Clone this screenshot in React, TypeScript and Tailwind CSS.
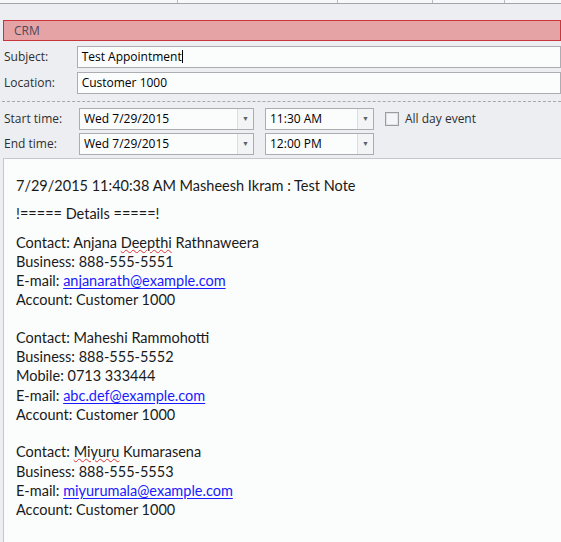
import React from 'react'

const labelFont = { fontFamily: '"Open Sans", "Noto Sans", sans-serif' }
const bodyFont = { fontFamily: 'Lato, "Liberation Sans", sans-serif' }

const Combo: React.FC<{ value: string; width: string }> = ({ value, width }) => (
  <div className={`flex h-[22px] border border-[#abadb3] bg-[#fbfcfc] ${width}`}>
    <div className="flex-1 pl-[4px] text-[12px] leading-[20px] text-black">{value}</div>
    <div className="w-[16px] border-l border-[#dcdee2] bg-[#f3f4f6] flex items-center justify-center">
      <span className="text-[7px] text-[#5c6068]">▼</span>
    </div>
  </div>
)

const Mail: React.FC<{ to: string }> = ({ to }) => (
  <a href={`mailto:${to}`} className="text-[#1a1aff] underline underline-offset-[2px]">{to}</a>
)

const Squiggle: React.FC<{ children: React.ReactNode }> = ({ children }) => (
  <span className="underline decoration-wavy decoration-[#e03030] decoration-[1px] underline-offset-[1px]">{children}</span>
)

export default function App() {
  return (
    <div className="w-[561px] h-[542px] overflow-hidden bg-[#eceef2]" style={labelFont}>
      {/* ribbon remnant */}
      <div className="flex h-[4px] bg-[#f7f8f9] border-b border-[#a3a5a9]">
        <div className="w-[178px] border-r border-[#b8babe]" />
        <div className="w-[160px] border-r border-[#b8babe]" />
        <div className="w-[95px] border-r border-[#b8babe]" />
        <div className="w-[72px] border-r border-[#b8babe]" />
      </div>

      <div className="ml-[3px] mt-[16px] h-[21px] border border-[#c8353b] bg-[#e6a3a5] pl-[10px] text-[12px] leading-[19px] text-[#4a4a5a]">
        CRM
      </div>

      <div className="flex flex-col gap-[4px] mt-[5px]">
        <div className="flex items-center">
          <div className="w-[79px] pl-[4px] text-[12px] text-[#2e2e2e]">Subject:</div>
          <div className="w-[500px] h-[22px] border border-[#abadb3] bg-[#fbfcfc] pl-[4px] text-[12px] leading-[20px] text-black">
            Test Appointment<span className="inline-block w-px h-[13px] bg-black align-[-2px]" />
          </div>
        </div>
        <div className="flex items-center">
          <div className="w-[79px] pl-[4px] text-[12px] text-[#2e2e2e]">Location:</div>
          <div className="w-[500px] h-[22px] border border-[#abadb3] bg-[#fbfcfc] pl-[4px] text-[12px] leading-[20px] text-black">
            Customer 1000
          </div>
        </div>
      </div>

      <div className="mt-[7px] ml-[2px] border-t border-dashed border-[#a6a8ac]" />

      <div className="flex flex-col gap-[3px] mt-[6px]">
        <div className="flex items-center">
          <div className="w-[79px] pl-[4px] text-[12px] text-[#2e2e2e]">Start time:</div>
          <Combo value="Wed 7/29/2015" width="w-[175px]" />
          <div className="w-[11px]" />
          <Combo value="11:30 AM" width="w-[109px]" />
          <div className="ml-[11px] w-[14px] h-[14px] border border-[#9a9ca2] bg-[#f4f5f7] shadow-[inset_0_0_0_1px_#e0e2e6]" />
          <div className="ml-[6px] text-[12px] text-[#2e2e2e]">All day event</div>
        </div>
        <div className="flex items-center">
          <div className="w-[79px] pl-[4px] text-[12px] text-[#2e2e2e]">End time:</div>
          <Combo value="Wed 7/29/2015" width="w-[175px]" />
          <div className="w-[11px]" />
          <Combo value="12:00 PM" width="w-[109px]" />
        </div>
      </div>

      <div
        className="ml-[3px] mt-[3px] w-[600px] h-[400px] border border-[#c5c7cb] bg-[#fbfdfd] pl-[12px] pt-[17px] text-[14.5px] leading-[19.3px] text-[#1a1a1a]"
        style={bodyFont}
      >
        <p>7/29/2015 11:40:38 AM Masheesh Ikram : Test Note</p>
        <p className="mt-[9px]">!===== Details =====!</p>
        <div className="mt-[9px]">
          <p>Contact: Anjana <Squiggle>Deepthi</Squiggle> Rathnaweera</p>
          <p>Business: 888-555-5551</p>
          <p>E-mail: <Mail to="anjanarath@example.com" /></p>
          <p>Account: Customer 1000</p>
        </div>
        <div className="mt-[18px]">
          <p>Contact: Maheshi Rammohotti</p>
          <p>Business: 888-555-5552</p>
          <p>Mobile: 0713 333444</p>
          <p>E-mail: <Mail to="abc.def@example.com" /></p>
          <p>Account: Customer 1000</p>
        </div>
        <div className="mt-[18px]">
          <p>Contact: <Squiggle>Miyuru</Squiggle> Kumarasena</p>
          <p>Business: 888-555-5553</p>
          <p>E-mail: <Mail to="miyurumala@example.com" /></p>
          <p>Account: Customer 1000</p>
        </div>
      </div>
    </div>
  )
}
